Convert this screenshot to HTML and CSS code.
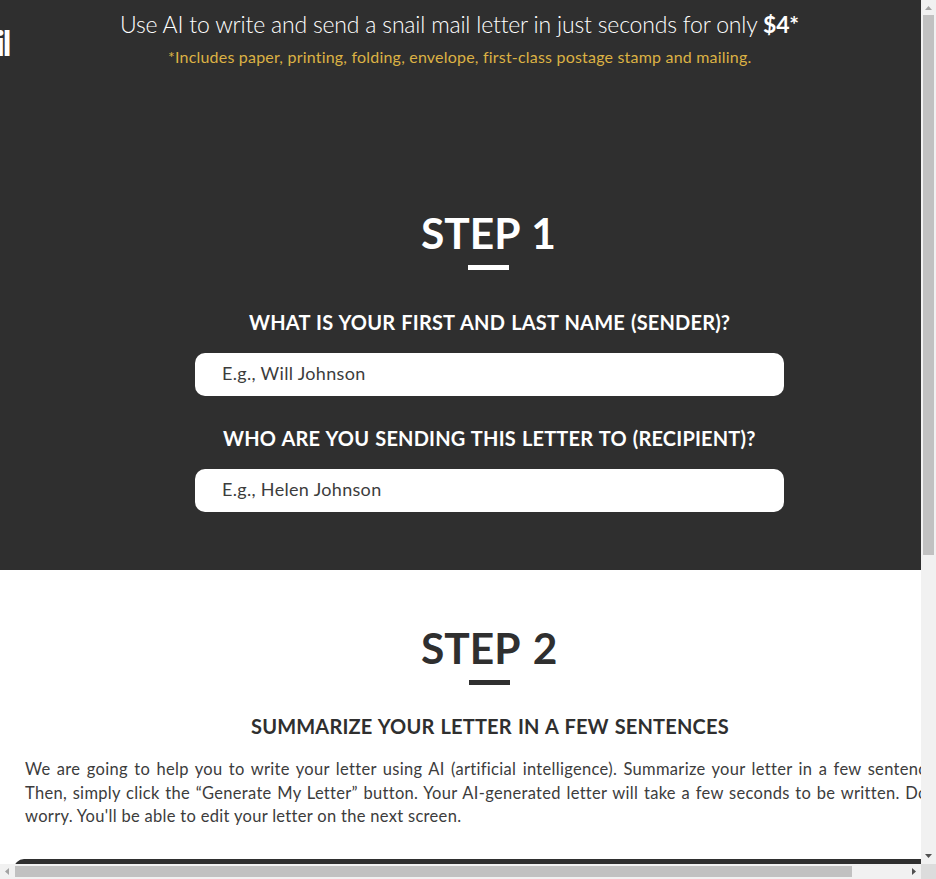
FILE: index.html
```html
<!DOCTYPE html>
<html lang="en">
<head>
<meta charset="utf-8">
<title>Write a letter</title>
<link rel="stylesheet" href="styles.css">
</head>
<body>
<div class="frame">
  <main class="viewport">
    <div class="page">
      <section class="hero">
        <div class="logo">il</div>
        <h1 class="tagline">Use AI to write and send a snail mail letter in just seconds for only <b>$4*</b></h1>
        <p class="note">*Includes paper, printing, folding, envelope, first-class postage stamp and mailing.</p>
        <h2 class="step">STEP 1</h2>
        <div class="rule"></div>
        <label class="question sender" for="sender">WHAT IS YOUR FIRST AND LAST NAME (SENDER)?</label>
        <input class="field" id="sender" placeholder="E.g., Will Johnson">
        <label class="question recipient" for="recipient">WHO ARE YOU SENDING THIS LETTER TO (RECIPIENT)?</label>
        <input class="field helen" id="recipient" placeholder="E.g., Helen Johnson">
      </section>
      <section class="summary">
        <h2 class="step">STEP 2</h2>
        <div class="rule"></div>
        <h3 class="question">SUMMARIZE YOUR LETTER IN A FEW SENTENCES</h3>
        <div class="copy">
          <p class="full">We are going to help you to write your letter using AI (artificial intelligence). Summarize your letter in a few sentences.</p>
          <p class="full">Then, simply click the “Generate My Letter” button. Your AI-generated letter will take a few seconds to be written. Don't</p>
          <p class="last">worry. You'll be able to edit your letter on the next screen.</p>
        </div>
        <div class="editor"></div>
      </section>
    </div>
  </main>
  <div class="bar vertical">
    <svg width="15" height="15"><path d="M4 10h7L7.500 6z" fill="#a3a3a3"/></svg>
    <div class="thumb"></div>
    <svg class="end" width="15" height="15"><path d="M4 5h7L7.500 9z" fill="#505050"/></svg>
  </div>
  <div class="bar horizontal">
    <svg width="15" height="15"><path d="M9 4v7L5 7.500z" fill="#a3a3a3"/></svg>
    <div class="thumb"></div>
    <svg class="end" width="15" height="15"><path d="M6 4v7L10 7.500z" fill="#505050"/></svg>
  </div>
  <div class="corner"></div>
</div>
</body>
</html>
```
FILE: styles.css
```css
* { box-sizing: border-box; }
body { margin: 0; overflow: hidden; font-family: Lato, "Liberation Sans", sans-serif; font-variant-ligatures: none; color: #2f2f2f; }
h1, h2, h3, p { margin: 0; font-weight: 400; }
.frame { display: grid; grid-template: 864px 15px / 921px 15px; width: 936px; height: 879px; }
.viewport { overflow: hidden; background: #fff; }
.page { width: 980px; }
.hero { position: relative; height: 570px; padding-top: 9px; background: #2f2f2f; color: #fff; }
.logo { position: absolute; left: -4px; top: 24px; font-size: 34px; line-height: 38px; font-weight: 900; letter-spacing: -2px; }
.tagline { padding-left: 120px; font-size: 23px; line-height: 30px; font-weight: 300; letter-spacing: -0.19px; white-space: nowrap; }
.tagline b { font-weight: 700; }
.note { margin-top: 6px; padding-left: 168px; font-size: 16px; line-height: 24px; letter-spacing: 0.2px; color: #dcb244; white-space: nowrap; }
.step { padding-left: 421px; font-size: 42.5px; line-height: 52px; font-weight: 700; word-spacing: 3px; white-space: nowrap; }
.hero .step { margin-top: 138px; word-spacing: 1.5px; }
.rule { width: 41px; height: 5px; margin: 6px 0 0 468px; background: #fff; }
.question { display: block; font-size: 20px; line-height: 24px; font-weight: 700; letter-spacing: 0.18px; word-spacing: 1px; white-space: nowrap; }
.sender { margin-top: 40px; padding-left: 249px; }
.recipient { margin-top: 30px; padding-left: 223px; }
.field { display: block; width: 589px; height: 43px; margin: 19px 0 0 195px; padding: 0 27px 3px; border: 0; border-radius: 10px; background: #fff; font: 400 18px/24px Lato, sans-serif; letter-spacing: 0.32px; }
.helen { margin-top: 19px; }
.field::placeholder { color: #3c3c3c; opacity: 1; }
.summary { padding-top: 52px; }
.summary .rule { margin-left: 469px; background: #2f2f2f; }
.summary .question { margin-top: 29px; padding-left: 251px; }
.copy { width: 922px; margin: 20px 0 0 25px; font-size: 16.5px; line-height: 23.5px; letter-spacing: 0.31px; color: #3c3c3c; }
.copy p { white-space: nowrap; }
.copy .full { text-align: justify; text-align-last: justify; }
.editor { height: 60px; margin: 30px 14px 0; border-radius: 10px; background: #2f2f2f; }
.bar { display: flex; background: #f1f1f1; }
.bar svg { flex: none; }
.bar .thumb { background: #c1c1c1; }
.bar .end { margin-top: auto; }
.vertical { flex-direction: column; }
.vertical .thumb { height: 540px; margin: 0 2px; }
.horizontal .thumb { width: 837px; margin: 2px 0; }
.horizontal .end { margin: 0 0 0 auto; }
.corner { background: #dcdcdc; }
```
